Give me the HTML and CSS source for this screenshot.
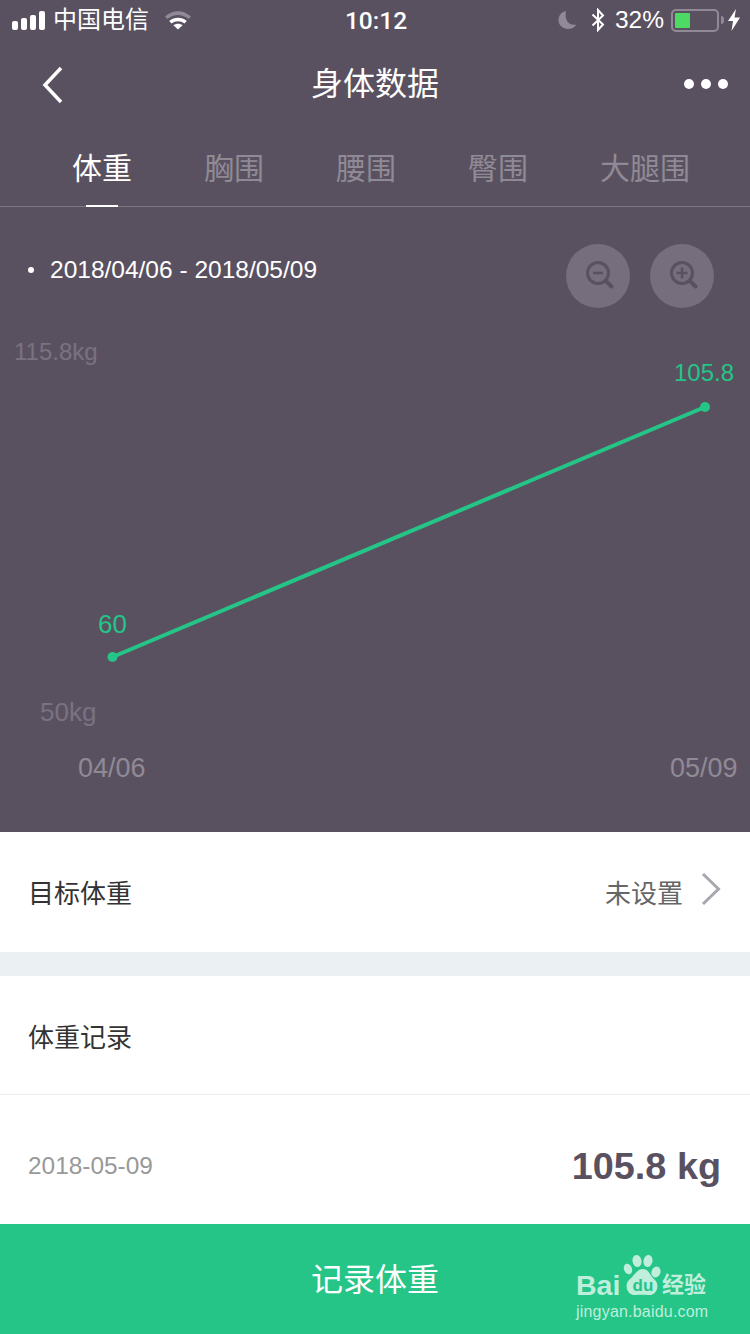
FILE: index.html
```html
<!DOCTYPE html>
<html lang="zh">
<head>
<meta charset="utf-8">
<title>身体数据</title>
<link rel="stylesheet" href="styles.css">
</head>
<body>
<div class="page">
  <section class="dark">
    <div class="status">
      <div class="status-left">
        <span class="signal"><i class="s1"></i><i class="s2"></i><i class="s3"></i><i class="s4"></i></span>
        <span class="carrier">中国电信</span>
        <svg class="wifi" width="28" height="20" viewBox="0 0 28 20"><path d="M1 6.500C9 -0.500 19 -0.500 27 6.500L24.600 9C18 3.500 10 3.500 3.400 9Z" fill="#8f8a95"/><path d="M5.200 11C10.500 6.600 17.500 6.600 22.800 11L20.400 13.400C16.500 10.400 11.500 10.400 7.600 13.400Z" fill="#fff"/><path d="M9.400 15.200C12.200 13.200 15.800 13.200 18.600 15.200L14 19.600Z" fill="#fff"/></svg>
      </div>
      <div class="time">10:12</div>
      <div class="status-right">
        <svg class="moon" width="20" height="20" viewBox="0 0 20 20"><path d="M8 1C3.500 2 .5 5.500 .5 10C.5 15.500 5 19 10 19C13.500 19 16.500 17.500 18.500 14.500C12.500 16 6 12 8 1Z" fill="#8f8a95"/></svg>
        <svg class="bt" width="14" height="24" viewBox="0 0 14 24"><path d="M1.500 6.500L12 16.500L7 22V2L12 7.500L1.500 17.500" fill="none" stroke="#fff" stroke-width="2"/></svg>
        <span class="pct">32%</span>
        <span class="battery"><span class="fill"></span></span>
        <span class="nub"></span>
        <svg class="bolt" width="12" height="22" viewBox="0 0 12 22"><path d="M8 0L0 12H5L3.500 22L12 8.500H6.500Z" fill="#fff"/></svg>
      </div>
    </div>
    <div class="nav">
      <svg class="back" width="24" height="38" viewBox="0 0 24 38"><path d="M21 2L5 19L21 36" fill="none" stroke="#fff" stroke-width="3.500"/></svg>
      <h1 class="title">身体数据</h1>
      <div class="more"><i></i><i></i><i></i></div>
    </div>
    <div class="tabs">
      <span class="tab active">体重</span>
      <span class="tab">胸围</span>
      <span class="tab">腰围</span>
      <span class="tab">臀围</span>
      <span class="tab">大腿围</span>
    </div>
    <div class="chart">
      <div class="legend"><i class="dot"></i><span>2018/04/06 - 2018/05/09</span></div>
      <div class="zoom-btns">
        <span class="zbtn"><svg width="32" height="32" viewBox="0 0 32 32"><circle cx="16" cy="13" r="10.500" fill="none" stroke="#5a5160" stroke-width="3"/><path d="M11 13H21" stroke="#5a5160" stroke-width="2.500"/><path d="M24 21L29.500 26.500" stroke="#5a5160" stroke-width="4" stroke-linecap="round"/></svg></span>
        <span class="zbtn"><svg width="32" height="32" viewBox="0 0 32 32"><circle cx="16" cy="13" r="10.500" fill="none" stroke="#5a5160" stroke-width="3"/><path d="M10.500 13H21.500M16 7.500V18.500" stroke="#5a5160" stroke-width="2.500"/><path d="M24 21L29.500 26.500" stroke="#5a5160" stroke-width="4" stroke-linecap="round"/></svg></span>
      </div>
      <svg class="plot" width="750" height="624" viewBox="0 0 750 624"><path d="M112.500 450L705 200" stroke="#24c587" stroke-width="4" fill="none"/><circle cx="112.500" cy="450" r="5" fill="#24c587"/><circle cx="705" cy="200" r="5" fill="#24c587"/></svg>
      <span class="lbl y-top">115.8kg</span>
      <span class="lbl y-bot">50kg</span>
      <span class="val v-end">105.8</span>
      <span class="val v-start">60</span>
      <span class="date d-start">04/06</span>
      <span class="date d-end">05/09</span>
    </div>
  </section>
  <div class="row target">
    <span class="row-label">目标体重</span>
    <span class="target-right"><span class="unset">未设置</span>
      <svg class="chev" width="20" height="34" viewBox="0 0 20 34"><path d="M2 2L17.500 17L2 32" fill="none" stroke="#a9a7ae" stroke-width="3"/></svg></span>
  </div>
  <div class="divider"></div>
  <div class="row records"><span class="row-label">体重记录</span></div>
  <div class="row entry">
    <span class="entry-date">2018-05-09</span>
    <span class="entry-val">105.8 kg</span>
  </div>
  <div class="cta">
    <span class="cta-text">记录体重</span>
    <div class="mark">
      <div class="mark-top">
        <span class="bai">Bai</span>
        <svg class="paw" width="38" height="42" viewBox="0 0 38 42"><g fill="#bfeedd"><ellipse cx="5" cy="14" rx="4" ry="5.500" transform="rotate(-20 5 14)"/><ellipse cx="14" cy="6" rx="4.500" ry="6" transform="rotate(-10 14 6)"/><ellipse cx="25" cy="6" rx="4.500" ry="6" transform="rotate(10 25 6)"/><ellipse cx="33" cy="17" rx="4.500" ry="5.500" transform="rotate(20 33 17)"/><path d="M20 14C26 14 27 21 32 25C37 30 34 41 25 40C21 39.500 17 39.500 13 40C4 41 1 30 6 25C11 21 14 14 20 14Z"/></g></svg>
        <span class="du">du</span>
        <span class="jy">经验</span>
      </div>
      <div class="mark-url">jingyan.baidu.com</div>
    </div>
  </div>
</div>
</body>
</html>
```
FILE: styles.css
```css
* { box-sizing: border-box; }
html, body { margin: 0; padding: 0; background: #fff; }
body { font-family: "Liberation Sans", "Noto Sans CJK SC", sans-serif; }
.page { width: 750px; height: 1334px; overflow: hidden; display: flex; flex-direction: column; }
.dark { height: 832px; background: #5a5160; color: #fff; display: flex; flex-direction: column; }

.status { height: 40px; padding: 0 10px 0 12px; display: flex; align-items: center; position: relative; }
.status-left { display: flex; align-items: center; }
.signal { display: flex; align-items: flex-end; gap: 3px; margin-right: 8px; height: 19px; }
.signal i { display: block; width: 6px; background: #fff; border-radius: 2px; }
.s1 { height: 9px; }
.s2 { height: 12px; }
.s3 { height: 15px; }
.s4 { height: 19px; }
.carrier { font-size: 24px; line-height: 38px; color: #fff; margin-right: 15px; }
.time { position: absolute; left: 2px; right: 0; top: 0; line-height: 41px; text-align: center; font-size: 24.500px; font-weight: 500; font-family: Roboto, sans-serif; }
.status-right { margin-left: auto; display: flex; align-items: center; }
.moon { margin-right: 13px; }
.bt { margin-right: 10px; }
.pct { font-size: 24.500px; margin-right: 7px; }
.battery { width: 48px; height: 23px; border: 2px solid #8f8a95; border-radius: 5px; padding: 2px; display: flex; }
.fill { width: 15px; background: #4cd964; border-radius: 1px; }
.nub { width: 3px; height: 8px; background: #8f8a95; border-radius: 0 3px 3px 0; margin: 0 4px 0 2px; }

.nav { height: 88px; display: flex; align-items: center; justify-content: space-between; padding: 0 22px 0 40px; position: relative; }
.back { margin-top: 1px; }
.title { position: absolute; left: 0; right: 0; top: 0; margin: 0; line-height: 89px; text-align: center; font-size: 32px; font-weight: 400; }
.more { display: flex; gap: 8px; }
.more i { display: block; width: 10px; height: 10px; border-radius: 50%; background: #fff; margin-left: -1px; }

.tabs { height: 79px; display: flex; gap: 72px; padding: 0 0 0 72px; border-bottom: 1px solid #7d7683; }
.tab { font-size: 30px; line-height: 81px; height: 78px; color: #8f8a95; position: relative; }
.tab.active { color: #fff; }
.tab.active::after { content: ""; position: absolute; left: 14px; width: 32px; bottom: -1px; height: 2px; background: #fff; }

.chart { flex: 1; position: relative; }
.legend { position: absolute; left: 28px; top: 48px; display: flex; align-items: center; font-size: 24.500px; line-height: 30px; }
.dot { width: 6px; height: 6px; border-radius: 50%; background: #fff; margin-right: 16px; }
.zoom-btns { position: absolute; left: 566px; top: 37px; display: flex; gap: 20px; }
.zbtn { width: 64px; height: 64px; border-radius: 50%; background: #766e7c; display: flex; align-items: center; justify-content: center; }
.plot { position: absolute; left: 0; top: 0; }
.lbl, .val, .date { position: absolute; font-size: 24px; line-height: 30px; white-space: nowrap; }
.lbl { color: #7a7280; }
.y-top { left: 14px; top: 130px; }
.y-bot { left: 40px; top: 490px; font-size: 26px; }
.val { color: #24c587; }
.v-end { left: 674px; top: 151px; }
.v-start { left: 98px; top: 402px; font-size: 26px; }
.date { color: #8f8a95; font-size: 27px; }
.d-start { left: 78px; top: 546px; }
.d-end { left: 670px; top: 546px; }

.row { display: flex; align-items: center; justify-content: space-between; background: #fff; padding: 0 28px; }
.row-label { font-size: 26px; color: #333; }
.target { height: 120px; padding: 0 29px 2px 28px; }
.target-right { display: flex; align-items: center; }
.unset { font-size: 26px; color: #666; margin-right: 18px; }
.chev { margin-top: -4px; }
.divider { height: 24px; background: #ebf0f2; }
.records { height: 119px; border-bottom: 1px solid #ebedef; }
.entry { height: 129px; padding: 13px 29px 0 28px; }
.entry-date { font-size: 24.400px; color: #999; }
.entry-val { font-size: 37.800px; font-weight: 700; color: #5a5160; }

.cta { flex: 1; background: #24c587; position: relative; display: flex; align-items: center; justify-content: center; padding-bottom: 4px; }
.cta-text { color: #fff; font-size: 32px; }
.mark { position: absolute; left: 576px; top: 30px; width: 140px; color: #bfeedd; }
.mark-top { position: relative; height: 46px; }
.bai { position: absolute; left: 0; top: 16px; font-size: 28.500px; line-height: 30px; font-weight: 700; }
.paw { position: absolute; left: 47px; top: 1px; }
.du { position: absolute; left: 50px; top: 22px; font-size: 17px; line-height: 20px; font-weight: 700; color: #24c587; width: 34px; text-align: center; }
.jy { position: absolute; left: 86px; top: 16px; font-size: 22px; line-height: 30px; font-weight: 700; white-space: nowrap; }
.mark-url { font-size: 16px; line-height: 22px; letter-spacing: .2px; margin-top: 1px; white-space: nowrap; }
```
